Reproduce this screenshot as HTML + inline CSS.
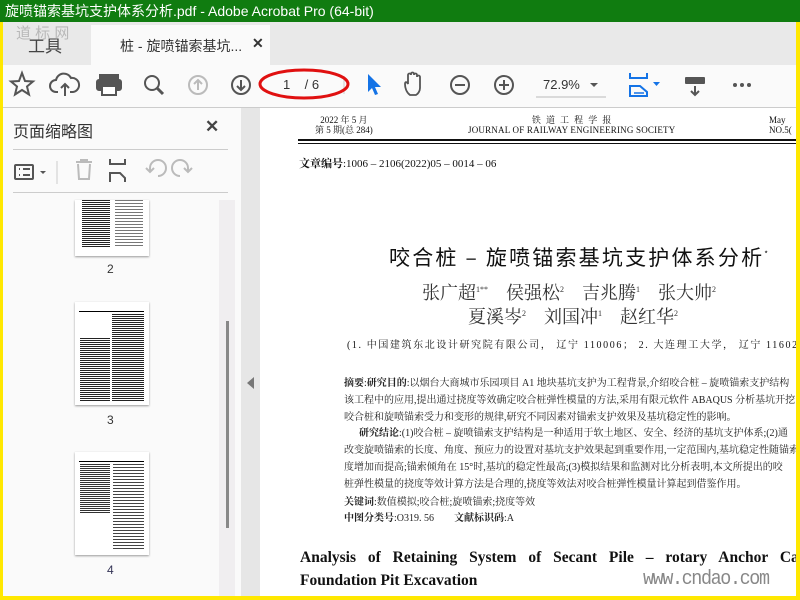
<!DOCTYPE html>
<html><head><meta charset="utf-8"><style>
*{margin:0;padding:0;box-sizing:border-box}
body{width:800px;height:600px;overflow:hidden;background:#ffe800;position:relative;font-family:"Liberation Sans","Noto Sans CJK SC",sans-serif}
.a{position:absolute}
.cjk{font-family:"Liberation Serif","Noto Serif CJK SC",serif}
.t{white-space:nowrap}
</style></head><body>
<div class="a" style="left:0;top:0;width:800px;height:22px;background:#107c10;color:#fff;font-size:14px;line-height:22px;padding-left:5px" >旋喷锚索基坑支护体系分析.pdf - Adobe Acrobat Pro (64-bit)</div>
<div class="a" style="left:3px;top:22px;width:793px;height:574px;background:#fafafa"></div>
<!-- tab bar -->
<div class="a" style="left:3px;top:22px;width:793px;height:43px;background:#e9e9e9"></div>
<div class="a t" style="left:28px;top:32px;font-size:17px;color:#444">工具</div>
<div class="a" style="left:91px;top:25px;width:179px;height:40px;background:#fafafa"></div>
<div class="a t" style="left:120px;top:36px;font-size:14px;color:#333">桩 - 旋喷锚索基坑...</div>
<div class="a t" style="left:252px;top:35px;font-size:14px;color:#333;font-weight:bold">✕</div>
<div class="a t" style="left:16px;top:22px;font-size:15px;color:#999;opacity:.6">道 标 网</div>
<!-- toolbar -->
<div class="a" style="left:3px;top:107px;width:793px;height:1px;background:#ccc"></div>
<svg class="a" style="left:0;top:65px" width="800" height="42" viewBox="0 65 800 42" fill="none" stroke="#555" stroke-width="2">
<path d="M22 73l3 8 8 .5-6 5 2 8-7-4.5-7 4.5 2-8-6-5 8-.5z"/>
<path d="M58 92h-2a6 6 0 0 1 0-12 8 8 0 0 1 15-2 6 6 0 0 1 2 14h-3M65 96v-12M61 88l4-4 4 4"/>
<rect x="100" y="75" width="18" height="5" fill="#555"/><rect x="97" y="80" width="24" height="10" rx="2" fill="#555"/><rect x="102" y="86" width="14" height="9" fill="#fff"/>
<circle cx="152" cy="83" r="7"/><path d="M157 88l6 6" stroke-width="3"/>
<circle cx="198" cy="85" r="9" stroke="#bbb"/><path d="M198 90v-9M194 84l4-4 4 4" stroke="#bbb"/>
<circle cx="241" cy="85" r="9"/><path d="M241 80v9M237 86l4 4 4-4"/>
<path d="M368 74v18l4-4 3 7 3-1-3-7h6z" fill="#1473e6" stroke="none"/>
<path d="M410 95c-4-3-5-8-5-11s2-2 3 0v-9c0-2 3-2 3 0v-1c0-2 3-2 3 0v1c0-2 3-2 3 0v2c0-2 3-2 3 0v11c0 3-2 6-4 7z" stroke-width="1.8"/>
<circle cx="460" cy="85" r="9"/><path d="M455 85h10"/>
<circle cx="504" cy="85" r="9"/><path d="M499 85h10M504 80v10"/>
<path d="M630 73v5h17v-5M630 96v-10h10l7 6v4z" stroke="#1473e6"/><path d="M634 93h10" stroke="#1473e6" stroke-width="1.5"/>
<path d="M653 82h7l-3.5 4z" fill="#1473e6" stroke="none"/>
<rect x="685" y="77" width="20" height="7" rx="1" fill="#555" stroke="none"/><path d="M695 86v9M691 91l4 4 4-4"/>
<circle cx="735" cy="85" r="2" fill="#555" stroke="none"/><circle cx="742" cy="85" r="2" fill="#555" stroke="none"/><circle cx="749" cy="85" r="2" fill="#555" stroke="none"/>
<path d="M344 76v18" stroke="#ccc" stroke-width="1"/>
<path d="M590 83h8l-4 4z" fill="#555" stroke="none"/>
<path d="M536 97h70" stroke="#bbb" stroke-width="1"/>
<ellipse cx="304" cy="84" rx="44" ry="14" stroke="#e01010" stroke-width="3"/>
</svg>
<div class="a t" style="left:283px;top:77px;font-size:13px;color:#333">1&nbsp;&nbsp;&nbsp;&nbsp;/ 6</div>
<div class="a t" style="left:543px;top:77px;font-size:13px;color:#333">72.9%</div>
<!-- left panel -->
<div class="a t" style="left:13px;top:118px;font-size:16px;color:#333">页面缩略图</div>
<div class="a t" style="left:205px;top:117px;font-size:17px;color:#444;font-weight:bold">✕</div>
<div class="a" style="left:13px;top:149px;width:215px;height:1px;background:#ccc"></div>
<div class="a" style="left:13px;top:192px;width:215px;height:1px;background:#ccc"></div>
<svg class="a" style="left:0;top:150px" width="240" height="42" viewBox="0 150 240 42" fill="none" stroke-width="2">
<rect x="15" y="165" width="18" height="14" rx="1" stroke="#555"/><path d="M19 169h1M23 169h7M19 175h1M23 175h7" stroke="#555"/><path d="M40 171h6l-3 3z" fill="#555"/>
<path d="M57 161v23" stroke="#ccc" stroke-width="1"/>
<path d="M76 162h16M81 162v-2h6v2M78 164l1 15h10l1-15" stroke="#bbb"/>
<path d="M110 159v5h15v-5M110 182v-9h10l5 5v4" stroke="#555"/>
<path d="M158 176a8 8 0 1 0-8-8v3M146 168l4 4 4-4" stroke="#bbb"/>
<path d="M180 176a8 8 0 1 1 8-8v3M192 168l-4 4-4-4" stroke="#bbb"/>
</svg>
<div class="a" style="left:219px;top:200px;width:16px;height:396px;background:#f0eef0"></div>
<div class="a" style="left:226px;top:321px;width:3px;height:207px;background:#888"></div>
<!-- thumbnails -->
<div class="a" style="left:75px;top:200px;width:74px;height:56px;background:#fff;box-shadow:0 1px 2px #999;overflow:hidden">
<div class="a" style="left:7px;top:0;width:28px;height:48px;background:repeating-linear-gradient(#222 0 1px,#fff 1px 2px)"></div>
<div class="a" style="left:40px;top:0;width:28px;height:48px;background:repeating-linear-gradient(#777 0 1px,#fff 1px 3px)"></div></div>
<div class="a" style="left:107px;top:262px;font-size:12px;color:#333">2</div>
<div class="a" style="left:75px;top:302px;width:74px;height:103px;background:#fff;box-shadow:0 1px 2px #999;overflow:hidden">
<div class="a" style="left:4px;top:9px;width:65px;height:1px;background:#000"></div>
<div class="a" style="left:5px;top:36px;width:30px;height:63px;background:repeating-linear-gradient(#222 0 1px,#fff 1px 2px)"></div>
<div class="a" style="left:37px;top:12px;width:32px;height:87px;background:repeating-linear-gradient(#222 0 1px,#fff 1px 2px)"></div></div>
<div class="a" style="left:107px;top:413px;font-size:12px;color:#333">3</div>
<div class="a" style="left:75px;top:452px;width:74px;height:103px;background:#fff;box-shadow:0 1px 2px #999;overflow:hidden">
<div class="a" style="left:4px;top:9px;width:65px;height:1px;background:#000"></div>
<div class="a" style="left:5px;top:12px;width:30px;height:50px;background:repeating-linear-gradient(#333 0 1px,#fff 1px 2px)"></div>
<div class="a" style="left:38px;top:12px;width:31px;height:85px;background:repeating-linear-gradient(#444 0 1px,#fff 1px 3px)"></div></div>
<div class="a" style="left:107px;top:563px;font-size:12px;color:#335">4</div>
<!-- gutter -->
<div class="a" style="left:241px;top:108px;width:19px;height:488px;background:#e6e6e6"></div>
<div class="a" style="left:247px;top:377px;width:0;height:0;border-top:6px solid transparent;border-bottom:6px solid transparent;border-right:7px solid #777"></div>
<!-- document -->
<div class="a cjk" style="left:260px;top:108px;width:536px;height:488px;background:#fff;overflow:hidden;color:#111">
<div class="a t" style="left:55px;top:7px;font-size:9px;line-height:10px;text-align:center">2022 年 5 月<br>第 5 期(总 284)</div>
<div class="a t" style="left:208px;top:7px;font-size:9px;line-height:10px;text-align:center;letter-spacing:.2px">铁&nbsp;&nbsp;道&nbsp;&nbsp;工&nbsp;&nbsp;程&nbsp;&nbsp;学&nbsp;&nbsp;报<br>JOURNAL OF RAILWAY ENGINEERING SOCIETY</div>
<div class="a t" style="left:509px;top:7px;font-size:9px;line-height:10px">May<br>NO.5(</div>
<div class="a" style="left:38px;top:31px;width:500px;border-top:2px solid #111;border-bottom:1px solid #111;height:5px"></div>
<div class="a t" style="left:39px;top:47px;font-size:11px"><b>文章编号</b>:1006 – 2106(2022)05 – 0014 – 06</div>
<div class="a t" style="left:129px;top:134px;font-size:21px;font-family:'Noto Sans CJK SC',sans-serif;letter-spacing:2.2px">咬合桩 – 旋喷锚索基坑支护体系分析<sup style="font-size:8px">*</sup></div>
<div class="a t" style="left:162px;top:171px;font-size:18px;color:#333">张广超<sup style="font-size:8px">1**</sup>&nbsp;&nbsp;&nbsp;&nbsp;侯强松<sup style="font-size:8px">2</sup>&nbsp;&nbsp;&nbsp;&nbsp;吉兆腾<sup style="font-size:8px">1</sup>&nbsp;&nbsp;&nbsp;&nbsp;张大帅<sup style="font-size:8px">2</sup></div>
<div class="a t" style="left:208px;top:195px;font-size:18px;color:#333">夏溪岑<sup style="font-size:8px">2</sup>&nbsp;&nbsp;&nbsp;&nbsp;刘国冲<sup style="font-size:8px">1</sup>&nbsp;&nbsp;&nbsp;&nbsp;赵红华<sup style="font-size:8px">2</sup></div>
<div class="a t" style="left:87px;top:228px;font-size:10px;letter-spacing:1.6px">(1. 中国建筑东北设计研究院有限公司， 辽宁 110006； 2. 大连理工大学， 辽宁 11602</div>
<div class="a t" style="left:84px;top:268px;font-size:10px;line-height:16.8px;color:#222">
<b>摘要</b>:<b>研究目的</b>:以烟台大商城市乐园项目 A1 地块基坑支护为工程背景,介绍咬合桩 – 旋喷锚索支护结构<br>
该工程中的应用,提出通过挠度等效确定咬合桩弹性模量的方法,采用有限元软件 ABAQUS 分析基坑开挖<br>
咬合桩和旋喷锚索受力和变形的规律,研究不同因素对锚索支护效果及基坑稳定性的影响。<br>
&nbsp;&nbsp;&nbsp;&nbsp;&nbsp;&nbsp;<b>研究结论</b>:(1)咬合桩 – 旋喷锚索支护结构是一种适用于软土地区、安全、经济的基坑支护体系;(2)通<br>
改变旋喷锚索的长度、角度、预应力的设置对基坑支护效果起到重要作用,一定范围内,基坑稳定性随锚索<br>
度增加而提高;锚索倾角在 15°时,基坑的稳定性最高;(3)模拟结果和监测对比分析表明,本文所提出的咬<br>
桩弹性模量的挠度等效计算方法是合理的,挠度等效法对咬合桩弹性模量计算起到借鉴作用。</div>
<div class="a t" style="left:84px;top:387px;font-size:10px;line-height:16px;color:#222"><b>关键词</b>:数值模拟;咬合桩;旋喷锚索;挠度等效<br><b>中图分类号</b>:O319. 56&nbsp;&nbsp;&nbsp;&nbsp;&nbsp;&nbsp;&nbsp;&nbsp;<b>文献标识码</b>:A</div>
<div class="a t" style="left:40px;top:438px;font-size:15.5px;line-height:23px;font-weight:bold;word-spacing:8px">Analysis of Retaining System of Secant Pile – rotary Anchor Cable<br><span style="word-spacing:0">Foundation Pit Excavation</span></div>
<div class="a t" style="left:383px;top:460px;font-size:20px;color:#888;font-family:'Liberation Mono',monospace;letter-spacing:-1.5px;transform:scaleX(.92);transform-origin:left">www.cndao.com</div>
</div>
</body></html>
